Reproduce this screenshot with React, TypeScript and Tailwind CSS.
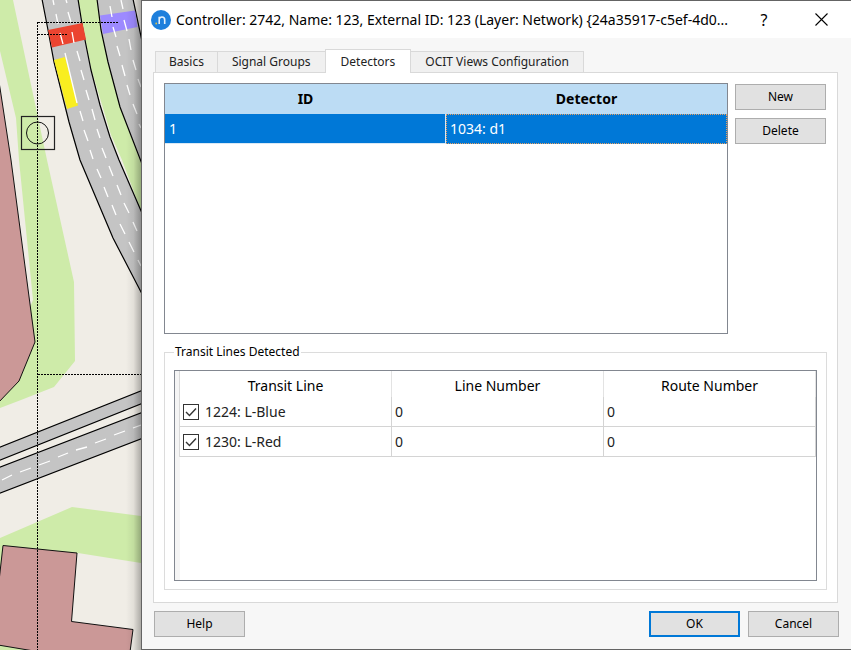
import { useState } from "react";

const LANE_MARKS = [
  "M53 0L54 5M56 14L58 24M60 33L63 44M65 53L77 103M80 111L83 121M84 130L88 141M90 150L93 159M97 169L101 178M104 187L108 197M112 205L116 215M120 224L125 234M129 242L134 252M138 260L141 266",
  "M66 0L67 3M68 12L71 22M72 32L74 43M77 51L80 61M81 70L84 80M86 90L89 100M92 109L95 120M97 129L100 138M102 148L106 158M109 166L113 176M117 185L121 195M124 203L129 213M133 222L137 231",
  "M110 6L112 17M113 27L116 37M117 46L120 56M122 65L125 76M127 85L130 95M133 104L137 114M139 124L141 128",
  "M121 0L123 9M124 20L127 31M129 39L131 50M133 60L136 70M138 79L141 87",
  "M2 480L12 475M20 472L31 468M39 465L50 461M58 457L68 453M76 450L87 447M95 443L106 439M114 435L125 431M133 428L141 425",
];

const TABS = ["Basics", "Signal Groups", "Detectors", "OCIT Views Configuration"];

const TRANSIT_LINES = [
  { name: "1224: L-Blue", lineNumber: "0", routeNumber: "0" },
  { name: "1230: L-Red", lineNumber: "0", routeNumber: "0" },
];

function NetworkMap() {
  return (
    <svg
      className="absolute inset-0 h-full w-full"
      viewBox="0 0 141 650"
      preserveAspectRatio="xMinYMin slice"
      aria-label="Network map"
    >
      <defs>
        <linearGradient id="edge" x1="0" x2="1">
          <stop offset="0" stopColor="#000" stopOpacity="0" />
          <stop offset="0.5" stopColor="#000" stopOpacity="0.06" />
          <stop offset="1" stopColor="#000" stopOpacity="0.28" />
        </linearGradient>
      </defs>
      <g fill="#ceeba9">
        <path d="M0 0H13L47 160L74 282L75 361L54 387L21 400L0 408V380L33 300L19 160L16 118L0 51Z" />
        <path d="M78 0H97L101 30L108 62L120 107L141 163V211L122 160L111 135L91 68Z" />
        <path d="M0 538L72 507L141 516V563L78 553L0 600Z" />
        <path d="M0 640H40V650H0Z" />
      </g>
      <g fill="#cb9897" stroke="#111" strokeWidth="1">
        <path d="M-2 76L0 88L11 160L35 342L19 381L-2 403Z" />
        <path d="M3 545.500L77 553L71.500 621.500L133 629.500L130 652H40L-2 645V590Z" />
      </g>
      <g fill="#c4c4c4" stroke="#000" strokeWidth="1.200">
        <path d="M42 -1L48 30L54 62L69 122L80 160L113 238L142 294V213L119 160L110 137L100 105L91 70L83 30L78 -1Z" />
        <path d="M97 -1L101 30L108 62L120 107L142 164V41L133 -1Z" />
        <path d="M-1 447.500L142 390.500V403.500L-1 460.500Z" />
        <path d="M-1 467.500L142 412.500V438.500L-1 493.500Z" />
      </g>
      <path d="M48 30L82.500 23L86 39.500L52 47.500Z" fill="#eb4430" />
      <path d="M100 15.500L135 10.500L137.500 27L103 34Z" fill="#9d8aff" />
      <path d="M54 60L65 57L78 105.500L67 109Z" fill="#f9ee20" />
      <g fill="none" stroke="#fff" strokeWidth="1.300">
        {LANE_MARKS.map((d) => (
          <path key={d} d={d} />
        ))}
      </g>
      <path
        d="M37.500 22V650M38 22.500H118M38 34.500H68M38 374.500H141"
        fill="none"
        stroke="#000"
        strokeDasharray="2 1"
      />
      <rect x="21.500" y="116.500" width="33" height="33" fill="none" stroke="#222" strokeWidth="1.200" />
      <circle cx="37.500" cy="133" r="11" fill="none" stroke="#111" />
      <rect x="126" width="15" height="650" fill="url(#edge)" />
    </svg>
  );
}

function AppLogo() {
  return (
    <svg className="h-5 w-5 shrink-0" viewBox="0 0 20 20" aria-hidden="true">
      <circle cx="10" cy="10" r="10" fill="#1d7fdc" />
      <circle cx="5.200" cy="13.500" r="0.900" fill="#e8c341" />
      <path
        d="M8.200 14V6.700M8.200 9.500C8.500 7.600 9.700 7 11 7C12.800 7 13.700 8 13.700 9.900V14"
        fill="none"
        stroke="#e4f1fc"
        strokeWidth="1.600"
      />
    </svg>
  );
}

function DialogButton({ label, primary = false }: { label: string; primary?: boolean }) {
  return (
    <button
      type="button"
      className={`h-[26px] w-[91px] shrink-0 bg-[#e1e1e1] text-xs leading-5 text-black ${
        primary ? "border-2 border-[#0078d7]" : "border border-[#adadad]"
      }`}
    >
      {label}
    </button>
  );
}

function TitleBar() {
  return (
    <header className="flex h-[37px] shrink-0 items-center bg-white pr-[14px] pl-[9px] text-black">
      <AppLogo />
      <h1 className="ml-[5px] min-w-0 flex-1 truncate text-sm leading-5">
        Controller: 2742, Name: 123, External ID: 123 (Layer: Network) {"{24a35917-c5ef-4d0..."}
      </h1>
      <button type="button" aria-label="Help" className="w-5 shrink-0 text-base leading-5">
        ?
      </button>
      <button type="button" aria-label="Close" className="ml-[31px] flex w-8 shrink-0 justify-center">
        <svg className="h-[13px] w-[13px]" viewBox="0 0 13 13">
          <path d="M0.500 0.500L12.500 12.500M12.500 0.500L0.500 12.500" stroke="#000" strokeWidth="1.100" />
        </svg>
      </button>
    </header>
  );
}

function TabBar({ active, onSelect }: { active: string; onSelect: (tab: string) => void }) {
  return (
    <div role="tablist" className="flex h-6 items-end pl-px text-xs leading-5 text-[#222]">
      {TABS.map((tab) => (
        <button
          key={tab}
          type="button"
          role="tab"
          aria-selected={tab === active}
          onClick={() => onSelect(tab)}
          className={
            tab === active
              ? "z-10 -mb-px h-6 border border-b-0 border-[#d9d9d9] bg-white px-[15px]"
              : "h-[21px] border border-r-0 border-b-0 border-[#d9d9d9] bg-[#f0f0f0] px-[14px] first:px-[13px] last:border-r last:border-l-0"
          }
        >
          {tab}
        </button>
      ))}
    </div>
  );
}

function DetectorTable() {
  return (
    <div className="min-h-[251px] flex-1 border border-[#828790] bg-white">
      <table className="w-full table-fixed border-separate border-spacing-0 text-sm leading-5">
        <thead>
          <tr className="h-[30px] bg-[#bcdcf4] text-black">
            <th className="p-0 font-bold">ID</th>
            <th className="p-0 font-bold">Detector</th>
          </tr>
        </thead>
        <tbody>
          <tr className="h-[30px] bg-[#0078d7] text-white">
            <td className="border-r border-b border-[#d8e8f5] px-1 py-0">1</td>
            <td className="border border-dotted border-[#e8a060] px-[3px] py-0">1034: d1</td>
          </tr>
        </tbody>
      </table>
    </div>
  );
}

function TransitTable() {
  const [checked, setChecked] = useState<Record<string, boolean>>({
    "1224: L-Blue": true,
    "1230: L-Red": true,
  });

  return (
    <div className="min-h-[211px] border border-[#828790] bg-[linear-gradient(to_right,#f5f5f5_5px,white_5px)]">
      <div className="pl-1">
        <table className="w-full table-fixed border-separate border-spacing-0 border-l border-[#d9d9d9] bg-white text-sm leading-5 text-[#222]">
          <thead>
            <tr className="h-[26px] text-black">
              {["Transit Line", "Line Number", "Route Number"].map((title) => (
                <th key={title} className="border-r border-[#e3e3e3] px-0 pt-1 pb-0 font-normal">
                  {title}
                </th>
              ))}
            </tr>
          </thead>
          <tbody>
            {TRANSIT_LINES.map((line) => (
              <tr key={line.name} className="h-[30px]">
                <td className="border-r border-b border-[#d4d4d4] px-[3px] py-0">
                  <label className="flex items-center gap-[6px]">
                    <span className="relative flex h-4 w-4">
                      <input
                        type="checkbox"
                        checked={checked[line.name]}
                        onChange={(e) => setChecked({ ...checked, [line.name]: e.target.checked })}
                        className="peer h-4 w-4 appearance-none border border-[#333] bg-white"
                      />
                      <svg
                        className="pointer-events-none absolute inset-0 hidden h-4 w-4 peer-checked:block"
                        viewBox="0 0 16 16"
                      >
                        <path d="M3 8L6.500 11.500L13 4.500" fill="none" stroke="#333" strokeWidth="1.400" />
                      </svg>
                    </span>
                    {line.name}
                  </label>
                </td>
                <td className="border-r border-b border-[#d4d4d4] px-[3px] py-0">{line.lineNumber}</td>
                <td className="border-r border-b border-[#d4d4d4] px-[3px] py-0">{line.routeNumber}</td>
              </tr>
            ))}
          </tbody>
        </table>
      </div>
    </div>
  );
}

export default function App() {
  const [tab, setTab] = useState("Detectors");

  return (
    <div className="flex min-h-screen bg-[#f0ede6] font-['Noto_Sans','Open_Sans',sans-serif]">
      <aside className="relative w-[141px] shrink-0 overflow-hidden">
        <NetworkMap />
      </aside>
      <main className="flex min-w-0 flex-1 flex-col border-y border-l border-[#646464] bg-[#f7f7f7]">
        <TitleBar />
        <div className="flex flex-1 flex-col px-3 pt-[10px] pb-3">
          <TabBar active={tab} onSelect={setTab} />
          <section className="mr-px -ml-px flex flex-1 flex-col border border-[#d9d9d9] bg-white p-[10px] pb-3">
            <div className="flex flex-1 gap-[7px]">
              <DetectorTable />
              <div className="mr-px flex flex-col gap-2 pt-px">
                <DialogButton label="New" />
                <DialogButton label="Delete" />
              </div>
            </div>
            <fieldset className="mt-2 min-w-0 border border-[#dcdcdc] px-[9px] pt-2 pb-2">
              <legend className="px-[1px] text-xs leading-5 text-black">Transit Lines Detected</legend>
              <TransitTable />
            </fieldset>
          </section>
          <footer className="mt-2 flex gap-2">
            <DialogButton label="Help" />
            <span className="flex-1" />
            <DialogButton label="OK" primary />
            <DialogButton label="Cancel" />
          </footer>
        </div>
      </main>
    </div>
  );
}
